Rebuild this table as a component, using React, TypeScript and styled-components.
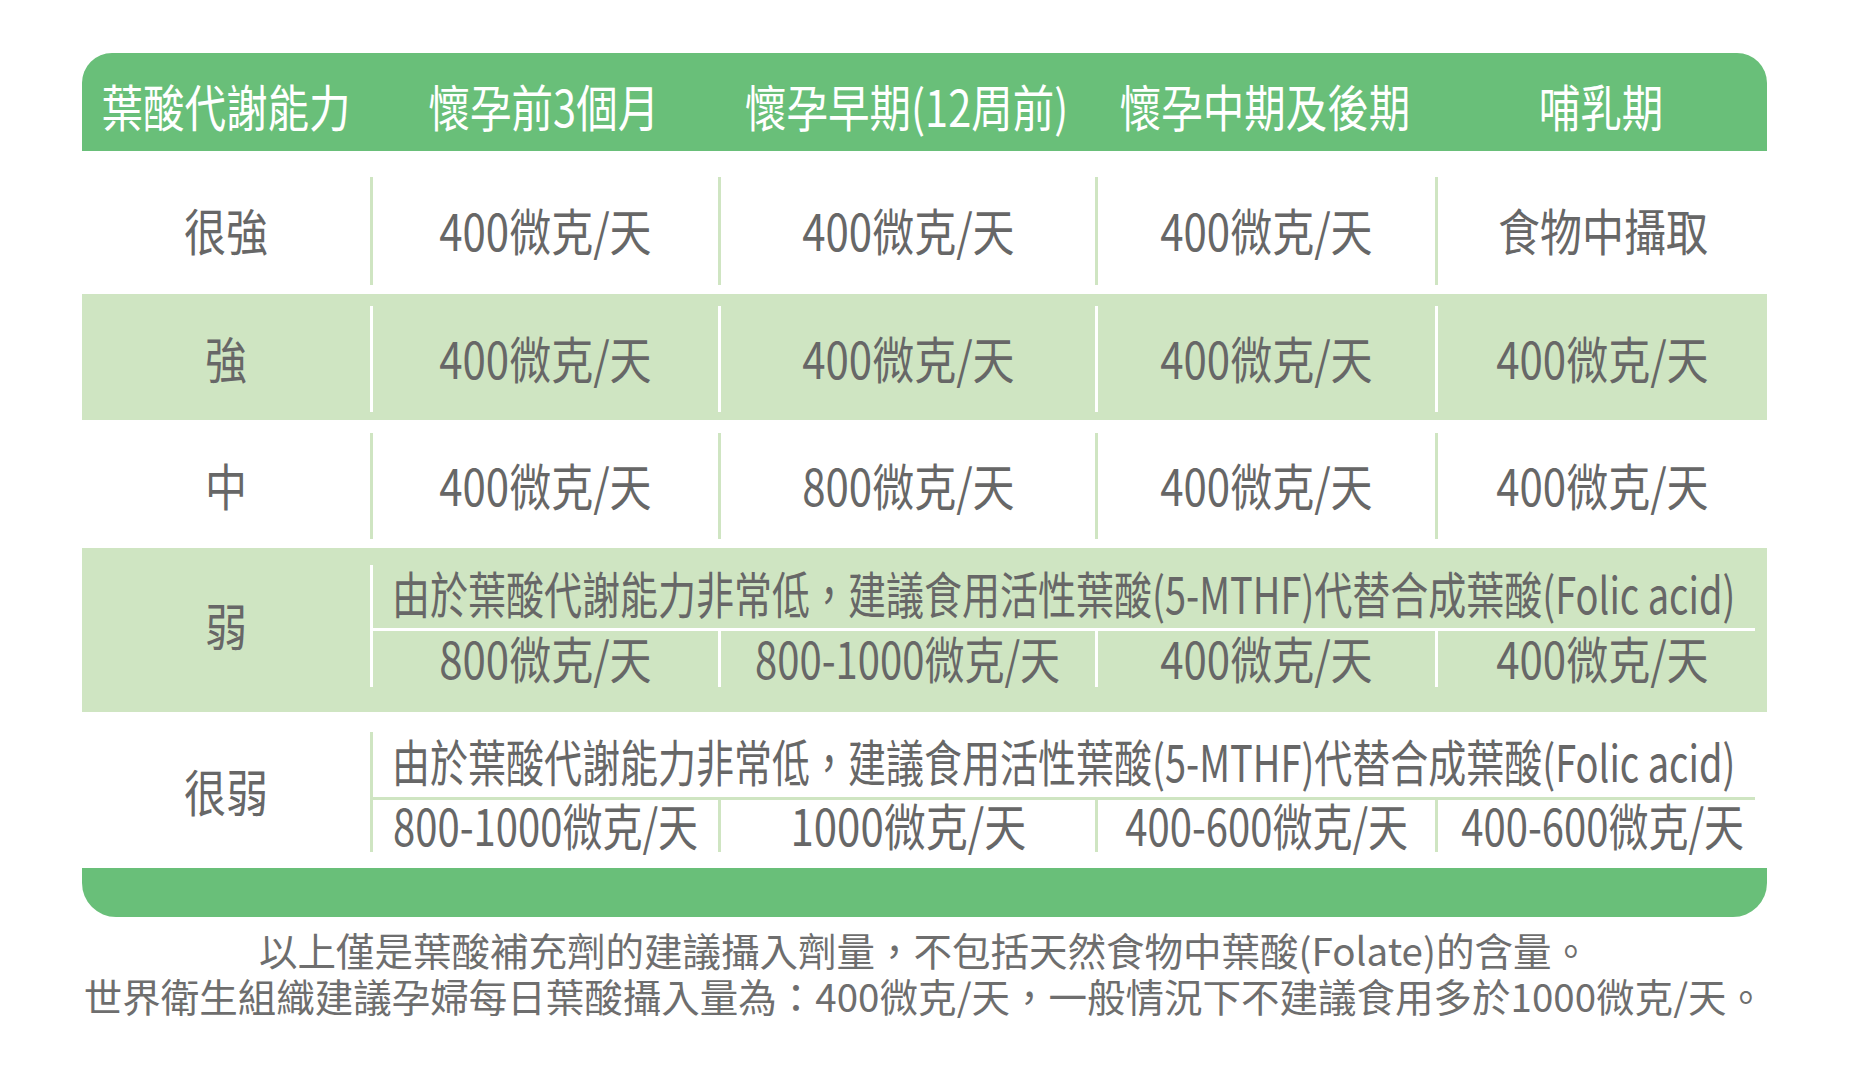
import styled, { createGlobalStyle } from 'styled-components';

const COLS = '288px 348px 377px 340px 332px';
const SUB_COLS = '345px 377px 340px 332px';
const GREEN = '#69bf79';
const PALE = '#cfe5c2';
const INK = '#676767';

const GlobalStyle = createGlobalStyle`
  * { box-sizing: border-box; }
  body {
    margin: 0;
    background: #fff;
    font-family: "Noto Sans CJK TC", "Noto Sans", sans-serif;
  }
`;

const Page = styled.div`
  padding: 53px 0 0 82px;
`;

const Table = styled.div`
  width: 1685px;
`;

const Head = styled.div`
  display: grid;
  grid-template-columns: ${COLS};
  height: 98px;
  padding-top: 6px;
  background: ${GREEN};
  border-radius: 30px 30px 0 0;
`;

const HeadCell = styled.div`
  display: flex;
  align-items: center;
  justify-content: center;
  color: #fff;
  font-size: 50px;
  line-height: 1;
  white-space: nowrap;
`;

// the print uses a condensed face, so glyphs are narrowed
const Squeeze = styled.span<{ $x?: number }>`
  display: inline-block;
  transform: scaleX(${p => p.$x ?? 0.84});
`;

const Row = styled.div<{ $pale?: boolean; $pad: string }>`
  display: grid;
  grid-template-columns: ${COLS};
  padding: ${p => p.$pad};
  background: ${p => (p.$pale ? PALE : '#fff')};
`;

const Cell = styled.div<{ $line?: string; $h: number }>`
  display: flex;
  align-items: center;
  justify-content: center;
  height: ${p => p.$h}px;
  padding-bottom: 5px;
  border-left: ${p => (p.$line ? `3px solid ${p.$line}` : 'none')};
  color: ${INK};
  font-size: 50px;
  line-height: 1;
  white-space: nowrap;
`;

const Label = styled.div`
  display: flex;
  align-items: center;
  justify-content: center;
  padding-bottom: 5px;
  color: ${INK};
  font-size: 50px;
  line-height: 1;
  white-space: nowrap;
`;

const Split = styled.div<{ $line: string }>`
  grid-column: 2 / 6;
  border-left: 3px solid ${p => p.$line};
`;

const Note = styled.div<{ $line: string; $h: number }>`
  display: flex;
  align-items: center;
  justify-content: center;
  height: ${p => p.$h}px;
  padding-bottom: 10px;
  margin-right: 12px;
  border-bottom: 3px solid ${p => p.$line};
  color: ${INK};
  font-size: 50px;
  line-height: 1;
  white-space: nowrap;
`;

const SubGrid = styled.div`
  display: grid;
  grid-template-columns: ${SUB_COLS};
`;

const Bar = styled.div`
  height: 49px;
  background: ${GREEN};
  border-radius: 0 0 34px 34px;
`;

const Foot = styled.div`
  margin-top: 9px;
  color: #6e6e6e;
  font-size: 38.5px;
  line-height: 46px;
  text-align: center;
  white-space: nowrap;
`;

const HEAD = ['葉酸代謝能力', '懷孕前3個月', '懷孕早期(12周前)', '懷孕中期及後期', '哺乳期'];

const SIMPLE = [
  { label: '很強', values: ['400微克/天', '400微克/天', '400微克/天', '食物中攝取'], pale: false, pad: '26px 0 9px', h: 108 },
  { label: '強', values: ['400微克/天', '400微克/天', '400微克/天', '400微克/天'], pale: true, pad: '12px 0 8px', h: 106 },
  { label: '中', values: ['400微克/天', '800微克/天', '400微克/天', '400微克/天'], pale: false, pad: '13px 0 9px', h: 106 },
];

const NOTE = '由於葉酸代謝能力非常低，建議食用活性葉酸(5-MTHF)代替合成葉酸(Folic acid)';

const SPLIT = [
  { label: '弱', values: ['800微克/天', '800-1000微克/天', '400微克/天', '400微克/天'], pale: true, pad: '17px 0 25px', noteH: 66, h: 56 },
  { label: '很弱', values: ['800-1000微克/天', '1000微克/天', '400-600微克/天', '400-600微克/天'], pale: false, pad: '20px 0 16px', noteH: 68, h: 52 },
];

function App() {
  return (
    <Page>
      <GlobalStyle />
      <Table>
        <Head>
          {HEAD.map(t => (
            <HeadCell key={t}>
              <Squeeze $x={0.83}>{t}</Squeeze>
            </HeadCell>
          ))}
        </Head>

        {SIMPLE.map(r => {
          const line = r.pale ? '#fff' : PALE;
          return (
            <Row key={r.label} $pale={r.pale} $pad={r.pad}>
              <Cell $h={r.h}>
                <Squeeze>{r.label}</Squeeze>
              </Cell>
              {r.values.map((v, i) => (
                <Cell key={i} $h={r.h} $line={line}>
                  <Squeeze>{v}</Squeeze>
                </Cell>
              ))}
            </Row>
          );
        })}

        {SPLIT.map(r => {
          const line = r.pale ? '#fff' : PALE;
          return (
            <Row key={r.label} $pale={r.pale} $pad={r.pad}>
              <Label>
                <Squeeze>{r.label}</Squeeze>
              </Label>
              <Split $line={line}>
                <Note $line={line} $h={r.noteH}>
                  <Squeeze $x={0.76}>{NOTE}</Squeeze>
                </Note>
                <SubGrid>
                  {r.values.map((v, i) => (
                    <Cell key={i} $h={r.h} $line={i > 0 ? line : undefined}>
                      <Squeeze $x={v.includes('-') ? 0.8 : 0.84}>{v}</Squeeze>
                    </Cell>
                  ))}
                </SubGrid>
              </Split>
            </Row>
          );
        })}

        <Bar />
        <Foot>
          以上僅是葉酸補充劑的建議攝入劑量，不包括天然食物中葉酸(Folate)的含量。
          <br />
          世界衛生組織建議孕婦每日葉酸攝入量為：400微克/天，一般情況下不建議食用多於1000微克/天。
        </Foot>
      </Table>
    </Page>
  );
}

export default App;
